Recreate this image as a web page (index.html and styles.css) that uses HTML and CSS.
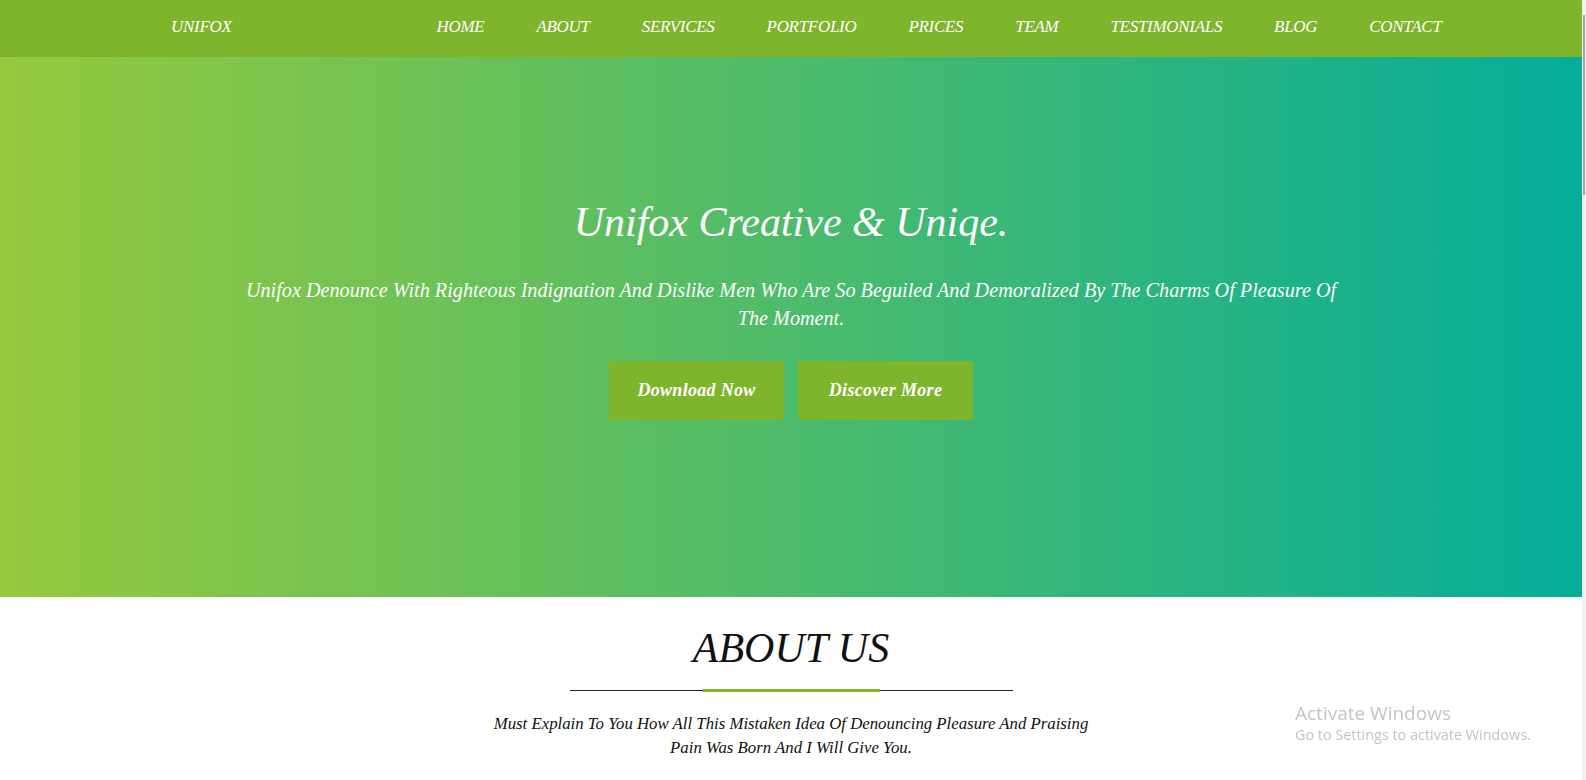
FILE: index.html
```html
<!DOCTYPE html>
<html lang="en">
<head>
<meta charset="utf-8">
<title>Unifox</title>
<link rel="stylesheet" href="styles.css">
</head>
<body>
<div class="window">
  <div class="page">
    <header class="topbar">
      <a class="brand" href="#">UNIFOX</a>
      <nav class="menu">
        <a href="#">HOME</a>
        <a href="#">ABOUT</a>
        <a href="#">SERVICES</a>
        <a href="#">PORTFOLIO</a>
        <a href="#">PRICES</a>
        <a href="#">TEAM</a>
        <a href="#">TESTIMONIALS</a>
        <a href="#">BLOG</a>
        <a href="#">CONTACT</a>
      </nav>
    </header>
    <section class="hero">
      <h1 class="hero-title">Unifox Creative &amp; Uniqe.</h1>
      <p class="hero-text">Unifox Denounce With Righteous Indignation And Dislike Men Who Are So Beguiled And Demoralized By The Charms Of Pleasure Of The Moment.</p>
      <div class="hero-actions">
        <a class="btn" href="#">Download Now</a>
        <a class="btn" href="#">Discover More</a>
      </div>
    </section>
    <section class="about">
      <h2 class="about-title">ABOUT US</h2>
      <div class="divider"><span class="divider-accent"></span></div>
      <p class="about-text">Must Explain To You How All This Mistaken Idea Of Denouncing Pleasure And Praising Pain Was Born And I Will Give You.</p>
    </section>
  </div>
  <div class="scrollbar"><div class="scroll-thumb"></div></div>
</div>
<div class="activate">
  <div class="activate-title">Activate Windows</div>
  <div class="activate-sub">Go to Settings to activate Windows.</div>
</div>
</body>
</html>
```
FILE: styles.css
```css
html, body {
  margin: 0;
  padding: 0;
  height: 780px;
  overflow: hidden;
  background: #ffffff;
}

.window {
  display: flex;
  width: 1586px;
  height: 780px;
}

.page {
  flex: 1;
  min-width: 0;
  font-family: "Liberation Serif", "Times New Roman", serif;
  font-style: italic;
}

.scrollbar {
  width: 4px;
  background: #f1f1f1;
  display: flex;
  justify-content: center;
  padding-top: 15px;
  box-sizing: border-box;
}

.scroll-thumb {
  width: 2px;
  height: 180px;
  background: #a3a3a3;
}

/* top bar */
.topbar {
  height: 57px;
  background: #7fb42d;
  display: flex;
  align-items: center;
  padding-left: 171px;
  padding-bottom: 3px;
  box-sizing: border-box;
}

.brand {
  color: #ffffff;
  text-decoration: none;
  font-size: 17px;
  letter-spacing: -0.3px;
}

.menu {
  display: flex;
  gap: 52px;
  margin-left: 205px;
}

.menu a {
  color: #ffffff;
  text-decoration: none;
  font-size: 17px;
  letter-spacing: -0.3px;
}

/* hero */
.hero {
  height: 540px;
  box-sizing: border-box;
  padding-top: 140px;
  background: linear-gradient(to right, #96c93d 0%, #04ad99 100%);
  display: flex;
  flex-direction: column;
  align-items: center;
  color: #ffffff;
}

.hero-title {
  margin: 0;
  font-size: 42px;
  font-weight: normal;
  line-height: 1.2;
}

.hero-text {
  margin: 29px 0 0;
  width: 1110px;
  text-align: center;
  font-size: 20.2px;
  line-height: 28px;
}

.hero-actions {
  display: flex;
  gap: 14px;
  margin-top: 29px;
}

.btn {
  width: 175px;
  height: 59px;
  display: flex;
  align-items: center;
  justify-content: center;
  background: #7fb42d;
  border-radius: 3px;
  color: #ffffff;
  text-decoration: none;
  font-weight: bold;
  font-size: 18px;
  letter-spacing: 0.3px;
}

/* about */
.about {
  padding-top: 26px;
  display: flex;
  flex-direction: column;
  align-items: center;
  color: #111111;
}

.about-title {
  margin: 0;
  font-size: 42px;
  font-weight: normal;
  line-height: 1.2;
}

.divider {
  margin-top: 16px;
  width: 443px;
  height: 3px;
  display: flex;
  justify-content: center;
  background: linear-gradient(to bottom, transparent 1px, #222222 1px, #222222 2px, transparent 2px);
}

.divider-accent {
  width: 177px;
  height: 3px;
  background: #7fb42d;
}

.about-text {
  margin: 20px 0 0;
  width: 615px;
  text-align: center;
  font-size: 16.8px;
  line-height: 24px;
}

/* windows watermark overlay */
.activate {
  position: fixed;
  left: 1295px;
  top: 701px;
  font-family: "Open Sans", "Noto Sans", sans-serif;
  color: #c4c4c4;
}

.activate-title {
  font-size: 19px;
  line-height: 24px;
}

.activate-sub {
  font-size: 14.4px;
  line-height: 20px;
}
```
